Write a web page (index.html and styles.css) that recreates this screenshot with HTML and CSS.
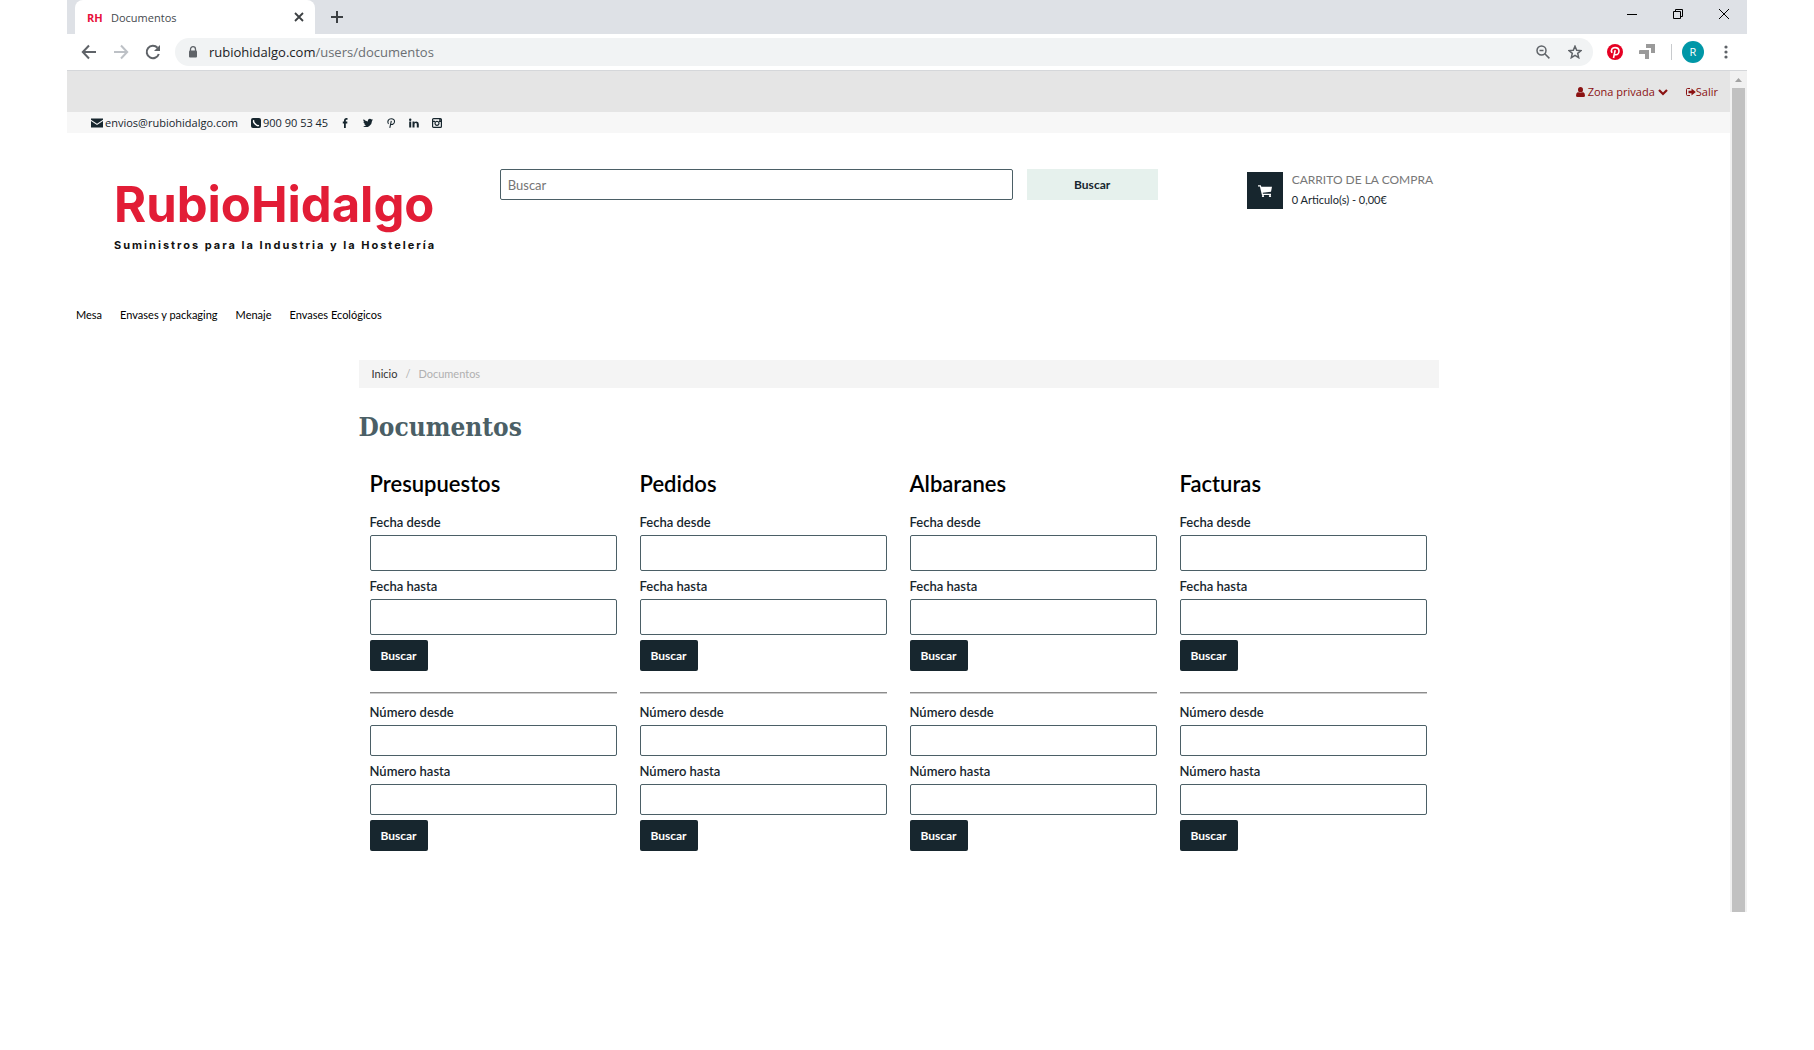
FILE: index.html
```html
<!DOCTYPE html>
<html lang="es">
<head>
<meta charset="utf-8">
<title>Documentos</title>
<link rel="stylesheet" href="styles.css">
</head>
<body>
<div class="window">
  <div class="tabstrip">
    <div class="tab">
      <span class="favicon">RH</span>
      <span class="tab-title">Documentos</span>
      <button class="icon-btn" aria-label="Cerrar pestaña"><svg width="10" height="10" viewBox="0 0 10 10"><path d="M1 1l8 8M9 1l-8 8" stroke="#3c4043" stroke-width="1.8"/></svg></button>
    </div>
    <button class="icon-btn new-tab" aria-label="Nueva pestaña"><svg width="12" height="12" viewBox="0 0 12 12"><path d="M6 0v12M0 6h12" stroke="#3c4043" stroke-width="2"/></svg></button>
    <div class="win-controls">
      <button class="icon-btn" aria-label="Minimizar"><svg width="12" height="12" viewBox="0 0 12 12"><path d="M1 6.500h10" stroke="#000"/></svg></button>
      <button class="icon-btn" aria-label="Restaurar"><svg width="12" height="12" viewBox="0 0 12 12"><path d="M1.500 3.500h7v7h-7zM3.500 3.500v-2h7v7h-2" fill="none" stroke="#000"/></svg></button>
      <button class="icon-btn" aria-label="Cerrar"><svg width="12" height="12" viewBox="0 0 12 12"><path d="M1 1l10 10M11 1L1 11" stroke="#000"/></svg></button>
    </div>
  </div>
  <div class="toolbar">
    <div class="history">
      <button class="icon-btn" aria-label="Atrás"><svg width="16" height="16" viewBox="0 0 16 16"><path d="M15 8H2M8 1.500L1.800 8 8 14.500" fill="none" stroke="#5f6368" stroke-width="2"/></svg></button>
      <button class="icon-btn" aria-label="Adelante"><svg width="16" height="16" viewBox="0 0 16 16"><path d="M1 8h13M8 1.500L14.200 8 8 14.500" fill="none" stroke="#bdc1c6" stroke-width="2"/></svg></button>
      <button class="icon-btn" aria-label="Recargar"><svg width="16" height="16" viewBox="0 0 16 16"><path d="M13.800 10A6.200 6.200 0 1 1 12.500 3.800" fill="none" stroke="#5f6368" stroke-width="2"/><path d="M15 1v6H9z" fill="#5f6368"/></svg></button>
    </div>
    <div class="address">
      <svg width="10" height="12" viewBox="0 0 10 12"><path d="M2.500 5V3.200a2.500 2.500 0 0 1 5 0V5" fill="none" stroke="#5f6368" stroke-width="1.300"/><rect x="1" y="4.500" width="8" height="7" rx="1" fill="#5f6368"/></svg>
      <span class="url">rubiohidalgo.com<span class="path">/users/documentos</span></span>
      <button class="icon-btn" aria-label="Zoom"><svg width="14" height="14" viewBox="0 0 14 14" fill="none" stroke="#5f6368" stroke-width="1.500"><circle cx="5.500" cy="5.500" r="4.500"/><path d="M3.500 5.500h4M8.800 8.800l4.600 4.600"/></svg></button>
      <button class="icon-btn" aria-label="Favorito"><svg width="14" height="14" viewBox="0 0 14 14"><path d="M7 1.200l1.700 4 4.300.4-3.300 2.800 1 4.300L7 10.400l-3.700 2.300 1-4.300L1 5.600l4.300-.4z" fill="none" stroke="#5f6368" stroke-width="1.500"/></svg></button>
    </div>
    <div class="extensions">
      <svg width="16" height="16" viewBox="0 0 16 16"><circle cx="8" cy="8" r="8" fill="#e60023"/><path d="M5 8.800C3.300 5.500 5.500 3.600 8 3.600c2.600 0 4 1.600 4 3.500 0 2.200-1.500 3.700-3 3.700-.9 0-1.500-.4-1.600-1M8.200 6.200L6.500 14" fill="none" stroke="#fff" stroke-width="1.600"/></svg>
      <svg width="16" height="16" viewBox="0 0 16 16" fill="#9a9a9a"><path d="M7 0h9v9h-4V4H7zM1 6h9v9H6v-5H0V7q0-1 1-1z"/></svg>
      <span class="divider"></span>
      <span class="avatar">R</span>
      <button class="icon-btn more" aria-label="Menú"><svg width="4" height="14" viewBox="0 0 4 14" fill="#5f6368"><circle cx="2" cy="2" r="1.600"/><circle cx="2" cy="7" r="1.600"/><circle cx="2" cy="12" r="1.600"/></svg></button>
    </div>
  </div>

  <div class="viewport">
    <div class="page">
      <div class="account">
        <a href="#"><svg width="9" height="10" viewBox="0 0 9 10"><path d="M4.500 0a2.500 2.800 0 1 1 0 5.600 2.500 2.800 0 0 1 0-5.600zM2 5q2.500 2 5 0 2 .5 2 3.500 0 1.500-1.500 1.500h-6Q0 10 0 8.500 0 5.500 2 5z" fill="#8b1212"/></svg>Zona privada<svg width="10" height="8" viewBox="0 0 10 8"><path d="M1 2l4 4 4-4" fill="none" stroke="#8b1212" stroke-width="2.200"/></svg></a>
        <a href="#" class="exit"><svg width="10" height="8" viewBox="0 0 10 8"><path d="M4 .5H1.500q-1 0-1 1v5q0 1 1 1H4" fill="none" stroke="#8b1212"/><path d="M2.500 2.700h3V.4L9.800 4 5.500 7.600V5.300h-3z" fill="#8b1212"/></svg>Salir</a>
      </div>
      <div class="contact">
        <a href="#" class="mail"><svg width="12" height="10" viewBox="0 0 12 10" fill="#17262e"><path d="M0 .5h12v1.200L6 5.800 0 1.700zM0 3l6 4 6-4v6.500H0z"/></svg>envios@rubiohidalgo.com</a>
        <a href="#" class="phone"><svg width="10" height="10" viewBox="0 0 10 10"><rect width="10" height="10" rx="2" fill="#17262e"/><path d="M3 2.200c-1.500 1.500 2.300 6.500 5 5.200" fill="none" stroke="#fff" stroke-width="1.500"/></svg>900 90 53 45</a>
        <div class="social">
          <a href="#" aria-label="Facebook"><svg width="10" height="10" viewBox="0 0 10 10"><path d="M7.500.9H6.400Q4.900.9 4.900 2.500V10M2.800 4.500h4.500" fill="none" stroke="#17262e" stroke-width="1.800"/></svg></a>
          <a href="#" aria-label="Twitter"><svg width="10" height="10" viewBox="0 0 24 20"><path d="M24 2.300a10 10 0 0 1-2.800.8A5 5 0 0 0 23.300.4a10 10 0 0 1-3.100 1.200 4.900 4.900 0 0 0-8.400 4.500A14 14 0 0 1 1.700.9a4.900 4.900 0 0 0 1.500 6.600A5 5 0 0 1 1 6.900a4.900 4.900 0 0 0 3.900 4.900 5 5 0 0 1-2.200.1 4.900 4.900 0 0 0 4.600 3.400A10 10 0 0 1 0 17.500 14 14 0 0 0 21.500 5a10 10 0 0 0 2.500-2.700z" fill="#17262e"/></svg></a>
          <a href="#" aria-label="Pinterest"><svg width="10" height="10" viewBox="0 0 10 10"><path d="M2.500 5.800C.8 3.500 2.500.7 5.200.7 7.500.7 8.800 2 8.500 4 8 6.800 5.200 7 4.600 5.600M5.300 2.800L3.800 9.800" fill="none" stroke="#17262e" stroke-width="1.100"/></svg></a>
          <a href="#" aria-label="LinkedIn"><svg width="10" height="10" viewBox="0 0 10 10" fill="#17262e"><circle cx="1.200" cy="1.700" r="1.200"/><path d="M.2 3.600h2V9.500h-2zM3.500 3.600h2v.8Q6 3.500 7.400 3.500 9.800 3.500 9.800 6v3.500h-2V6.300Q7.800 5.100 6.800 5.100 5.500 5.100 5.500 6.500v3h-2z"/></svg></a>
          <a href="#" aria-label="Instagram"><svg width="10" height="10" viewBox="0 0 10 10" fill="none" stroke="#17262e"><rect x=".6" y=".6" width="8.800" height="8.800" rx="1" stroke-width="1.200"/><circle cx="5" cy="5.300" r="2" stroke-width="1.200"/><path d="M0 3.300h3M7 3.300h3M7 1.800h2" stroke-width="1.300"/></svg></a>
        </div>
      </div>

      <header class="header">
        <a href="#" class="logo"><span class="brand">RubioHidalgo</span><span class="tagline">Suministros para la Industria y la Hostelería</span></a>
        <form class="search"><input type="text" class="search-box" placeholder="Buscar" aria-label="Buscar"><button type="button" class="search-btn">Buscar</button></form>
        <div class="cart">
          <button class="cart-btn" aria-label="Carrito"><svg width="14" height="12" viewBox="0 0 14 12" fill="#fff"><path d="M0 .3h2.800l.5 1.500H14l-1 5-8.300 1 .2.900H13v1.200H3.900L1.900 1.500H0z"/><circle cx="5" cy="11" r="1.100"/><circle cx="12" cy="11" r="1.100"/></svg></button>
          <div class="cart-text"><span class="cart-title">CARRITO DE LA COMPRA</span><span class="cart-total">0 Articulo(s) - 0,00€</span></div>
        </div>
      </header>

      <nav class="menu"><a href="#">Mesa</a><a href="#">Envases y packaging</a><a href="#">Menaje</a><a href="#">Envases Ecológicos</a></nav>

      <main class="content">
        <div class="breadcrumb"><a href="#">Inicio</a><span>/</span><span>Documentos</span></div>
        <h1>Documentos</h1>
        <div class="columns">
          <section class="column">
            <h2>Presupuestos</h2>
            <form><label for="p1">Fecha desde</label><input class="date" id="p1" type="text"><label for="p2">Fecha hasta</label><input class="date" id="p2" type="text"><button type="button" class="submit">Buscar</button></form>
            <hr>
            <form><label for="p3">Número desde</label><input id="p3" type="text"><label for="p4">Número hasta</label><input id="p4" type="text"><button type="button" class="submit">Buscar</button></form>
          </section>
          <section class="column">
            <h2>Pedidos</h2>
            <form><label for="d1">Fecha desde</label><input class="date" id="d1" type="text"><label for="d2">Fecha hasta</label><input class="date" id="d2" type="text"><button type="button" class="submit">Buscar</button></form>
            <hr>
            <form><label for="d3">Número desde</label><input id="d3" type="text"><label for="d4">Número hasta</label><input id="d4" type="text"><button type="button" class="submit">Buscar</button></form>
          </section>
          <section class="column">
            <h2>Albaranes</h2>
            <form><label for="a1">Fecha desde</label><input class="date" id="a1" type="text"><label for="a2">Fecha hasta</label><input class="date" id="a2" type="text"><button type="button" class="submit">Buscar</button></form>
            <hr>
            <form><label for="a3">Número desde</label><input id="a3" type="text"><label for="a4">Número hasta</label><input id="a4" type="text"><button type="button" class="submit">Buscar</button></form>
          </section>
          <section class="column">
            <h2>Facturas</h2>
            <form><label for="f1">Fecha desde</label><input class="date" id="f1" type="text"><label for="f2">Fecha hasta</label><input class="date" id="f2" type="text"><button type="button" class="submit">Buscar</button></form>
            <hr>
            <form><label for="f3">Número desde</label><input id="f3" type="text"><label for="f4">Número hasta</label><input id="f4" type="text"><button type="button" class="submit">Buscar</button></form>
          </section>
        </div>
      </main>
    </div>
    <div class="scrollbar">
      <svg width="17" height="17" viewBox="0 0 17 17"><path d="M5 11l3.500-4L12 11z" fill="#a3a3a3"/></svg>
      <div class="thumb"></div>
    </div>
  </div>
</div>
</body>
</html>
```
FILE: styles.css
```css
* { box-sizing: border-box; }
body {
  margin: 0;
  padding: 0 67px;
  background: #fff;
  color: #17262e;
  font-family: "Open Sans", sans-serif;
  font-size: 11px;
}
a { color: inherit; text-decoration: none; }
svg { display: block; flex: none; }
button, input { font: inherit; color: inherit; }
.icon-btn { display: flex; padding: 0; border: 0; background: none; }

/* Browser frame */
.tabstrip {
  display: flex;
  align-items: center;
  height: 34px;
  padding: 0 17px 0 8px;
  background: #dee1e6;
}
.tab {
  display: flex;
  align-items: center;
  align-self: stretch;
  width: 240px;
  padding: 0 11px 0 12px;
  border-radius: 8px 8px 0 0;
  background: #fff;
}
.favicon { width: 24px; color: #e8113c; font-weight: 700; }
.tab-title { flex: 1; color: #45494d; }
.new-tab { margin-left: 16px; }
.win-controls { display: flex; gap: 34px; margin-left: auto; margin-bottom: 6px; }
.toolbar {
  display: flex;
  align-items: center;
  height: 37px;
  padding: 0 19px 0 14px;
  border-bottom: 1px solid #d5d7da;
}
.history { display: flex; gap: 16px; width: 94px; }
.address {
  display: flex;
  flex: 1;
  align-items: center;
  gap: 18px;
  height: 28px;
  padding: 0 11px 0 13px;
  border-radius: 14px;
  background: #f1f3f4;
}
.url { flex: 1; margin-left: -7px; color: #202124; font-size: 13px; }
.path { color: #6b6f73; }
.extensions { display: flex; align-items: center; gap: 16px; margin-left: 14px; }
.divider { width: 1px; height: 16px; background: #c8cacd; margin-right: -6px; }
.avatar {
  width: 22px;
  border-radius: 50%;
  background: #0097a7;
  color: #fff;
  line-height: 22px;
  text-align: center;
}
.more { margin-left: 4px; }
.viewport { display: flex; }
.page { flex: 1; padding-bottom: 61px; }
.scrollbar {
  display: flex;
  flex-direction: column;
  width: 17px;
  padding: 0 2px;
  background: #f1f1f1;
}
.scrollbar svg { margin-left: -2px; }
.thumb { flex: 1; background: #c1c1c1; }

/* Top bars */
.account {
  display: flex;
  justify-content: flex-end;
  align-items: center;
  gap: 18px;
  height: 41px;
  padding-right: 12px;
  background: #e5e5e5;
  color: #8b1212;
}
.account a { display: flex; align-items: center; gap: 3px; }
.account .exit { gap: 0; }
.contact {
  display: flex;
  align-items: center;
  height: 21px;
  padding-left: 24px;
  background: #f7f7f7;
}
.contact a { display: flex; align-items: center; gap: 2px; }
.mail { margin-right: 13px; }
.social { display: flex; gap: 13px; margin-left: 12px; }

/* Header */
.header {
  display: grid;
  grid-template-columns: 3fr 5fr 4fr;
  align-items: start;
  padding-top: 36px;
  font-family: Lato, sans-serif;
}
.logo { display: flex; flex-direction: column; gap: 4px; padding: 8px 0 0 47px; white-space: nowrap; }
.brand { color: #e21d36; font: 700 49px/56px Inter, sans-serif; }
.tagline { color: #111; font: 700 11px/16px Inter, sans-serif; letter-spacing: 2px; }
.search { display: flex; gap: 14px; padding: 0 18px 0 17px; }
.search-box {
  flex: 1;
  min-width: 0;
  height: 31px;
  padding: 0 7px;
  border: 1px solid #4b5f66;
  border-radius: 2px;
  font-size: 13px;
}
.search-box::placeholder { color: #757575; }
.search-btn { width: 131px; border: 0; background: #e6f1ed; font-size: 12px; font-weight: 700; }
.cart { display: flex; gap: 9px; padding: 3px 0 0 71px; }
.cart-btn {
  display: grid;
  place-items: center;
  width: 36px;
  height: 37px;
  border: 0;
  background: #17262e;
}
.cart-text { display: flex; flex-direction: column; line-height: 20px; }
.cart-title { margin-top: -2px; color: #777; font-size: 12px; }
.menu {
  display: flex;
  gap: 18px;
  padding: 52px 9px 0;
  color: #000;
  font: 11px/20px Lato, sans-serif;
}

/* Documents */
.content { max-width: 1080px; margin: 35px auto 0; font-family: Lato, sans-serif; }
.breadcrumb {
  display: flex;
  gap: 8px;
  padding: 0 13px;
  background: #f4f4f4;
  color: #b0b0b0;
  line-height: 28px;
}
.breadcrumb a { color: #333; }
h1 {
  margin: 21px 0 0;
  color: #4b5f66;
  font: 700 26px/36px "DejaVu Serif Condensed", "DejaVu Serif", serif;
}
.columns { display: grid; grid-template-columns: repeat(4, 1fr); }
.column { padding: 0 12px 0 11px; }
h2 { margin: 24px 0 8px; color: #000; font-size: 22px; font-weight: 600; line-height: 30px; }
form { margin: 0; }
label { display: block; padding: 6px 0 4px; font-size: 13px; font-weight: 600; line-height: 18px; }
.column input {
  display: block;
  width: 100%;
  height: 31px;
  padding: 0 7px;
  border: 1px solid #4b5f66;
  border-radius: 2px;
}
.column .date { height: 36px; }
.submit {
  display: block;
  width: 58px;
  height: 31px;
  margin-top: 5px;
  padding: 0;
  border: 0;
  border-radius: 2px;
  background: #17262e;
  color: #fff;
  font-size: 12px;
  font-weight: 700;
}
hr { height: 2px; margin: 21px 0 3px; border: 0; border-top: 1px solid #8c8c8c; border-bottom: 1px solid #ccc; }
```
